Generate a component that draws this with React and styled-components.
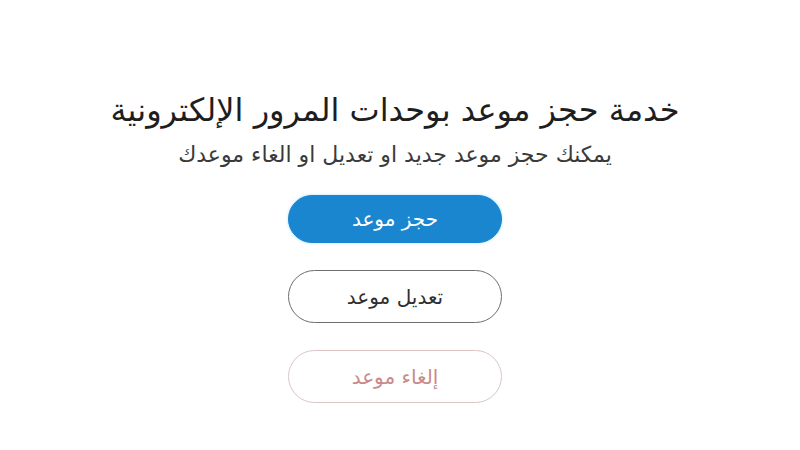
import styled, { createGlobalStyle } from "styled-components";

const GlobalStyle = createGlobalStyle`
  html, body {
    margin: 0;
    background: #ffffff;
  }
  body {
    font-family: "DejaVu Sans", "Noto Sans", sans-serif;
  }
`;

export default function App() {
  return (
    <>
      <GlobalStyle />
      <Page dir="rtl">
        <Title>خدمة حجز موعد بوحدات المرور الإلكترونية</Title>
        <Subtitle>يمكنك حجز موعد جديد او تعديل او الغاء موعدك</Subtitle>
        <Actions>
          <ActionButton $variant="primary">حجز موعد</ActionButton>
          <ActionButton $variant="outline">تعديل موعد</ActionButton>
          <ActionButton $variant="danger">إلغاء موعد</ActionButton>
        </Actions>
      </Page>
    </>
  );
}

const Page = styled.div`
  width: 800px;
  height: 450px;
  display: flex;
  flex-direction: column;
  align-items: center;
  padding-top: 88px;
  padding-right: 10px;
  box-sizing: border-box;
`;

const Title = styled.h1`
  margin: 0;
  font-size: 32px;
  font-weight: 400;
  color: #1e1e1e;
  line-height: 44px;
`;

const Subtitle = styled.p`
  margin: 9px 0 0;
  font-size: 22px;
  color: #3a3a3a;
  line-height: 28px;
`;

const Actions = styled.div`
  margin-top: 26px;
  display: flex;
  flex-direction: column;
  gap: 27px;
`;

const variants = {
  primary: `
    background: #1a86cf;
    color: #ffffff;
    border: 1px solid #1a86cf;
    height: 48px;
    box-shadow: 0 0 3px rgba(80, 200, 255, 0.5);
  `,
  outline: `
    background: #ffffff;
    color: #2f2f2f;
    border: 1.5px solid #6e6e6e;
    height: 53px;
  `,
  danger: `
    background: #ffffff;
    color: #c98a8a;
    border: 1.5px solid #dcc4c4;
    height: 53px;
  `,
};

const ActionButton = styled.button`
  width: 214px;
  box-sizing: border-box;
  border-radius: 27px;
  font-family: "DejaVu Sans", sans-serif;
  font-size: 20px;
  cursor: pointer;
  ${({ $variant }) => variants[$variant]}
`;
